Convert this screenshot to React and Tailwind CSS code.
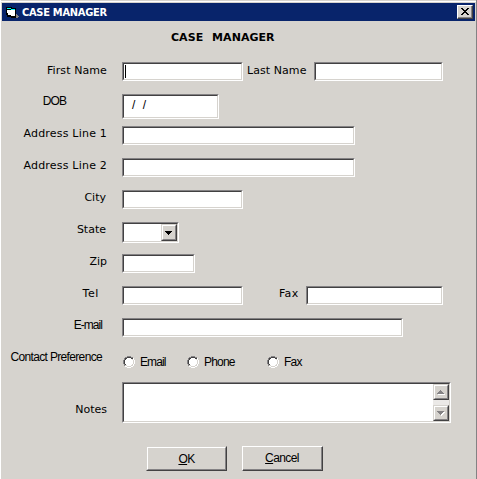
import React from 'react';

function Label({ className = '', children }) {
  return <span className={`block shrink-0 whitespace-pre leading-[13px] ${className}`}>{children}</span>;
}

function Field({ className = '', children }) {
  return (
    <div className={`shrink-0 border-t border-l border-b border-r border-t-[#848284] border-l-[#848284] border-b-white border-r-white ${className}`}>
      <div className="flex h-full w-full border border-t-[#424142] border-l-[#424142] border-b-[#d6d3ce] border-r-[#d6d3ce] bg-white">
        {children}
      </div>
    </div>
  );
}

function Row({ label, labelClass = '', className = 'h-8', children }) {
  return (
    <div className={`flex shrink-0 items-start ${className}`}>
      <div className="flex w-[121px] shrink-0 justify-end">
        <Label className={labelClass}>{label}</Label>
      </div>
      {children}
    </div>
  );
}

function Radio({ label, className = '', labelClass = '' }) {
  return (
    <div className={`flex shrink-0 items-start ${className}`}>
      <svg className="mt-[6px] shrink-0" width="12" height="12" viewBox="0 0 12 12" shapeRendering="crispEdges">
        <path fill="#fff" d="M4 1h4v1h2v2h1v4h-1v2h-2v1h-4v-1h-2v-2h-1v-4h1v-2h2z" />
        <path fill="#848284" d="M4 0h4v1h-4zM2 1h2v1h-2zM8 1h2v1h-2zM1 2h1v2h-1zM0 4h1v4h-1zM1 8h1v2h-1z" />
        <path fill="#424142" d="M4 1h4v1h-4zM2 2h2v1h-2zM8 2h2v1h-2zM2 3h1v1h-1zM1 4h1v4h-1zM2 8h1v1h-1z" />
        <path fill="#d6d3ce" d="M9 3h1v1h-1zM10 4h1v4h-1zM9 8h1v1h-1zM8 9h2v1h-2zM4 10h4v1h-4zM2 9h2v1h-2z" />
        <path fill="#fff" d="M10 2h1v2h-1zM11 4h1v4h-1zM10 8h1v2h-1zM8 10h2v1h-2zM4 11h4v1h-4zM2 10h2v1h-2z" />
      </svg>
      <Label className={`mt-[6px] ml-[5px] font-['Liberation_Sans',sans-serif] text-[12px] ${labelClass}`}>{label}</Label>
    </div>
  );
}

const raised = 'flex items-center justify-center border border-t-[#d6d3ce] border-l-[#d6d3ce] border-r-[#424142] border-b-[#424142] bg-[#d6d3ce]';
const raisedInner = 'h-full w-full border border-t-white border-l-white border-r-[#848284] border-b-[#848284]';

function ScrollButton({ down }) {
  return (
    <div className={`h-4 w-4 shrink-0 ${raised}`}>
      <div className={raisedInner}>
        <svg width="12" height="12" viewBox="0 0 12 12" shapeRendering="crispEdges">
          {down ? (
            <>
              <path fill="#fff" d="M3 5h7v1h-1v1h-1v1h-1v1h-1v-1h-1v-1h-1v-1h-1z" />
              <path fill="#848284" d="M2 4h7v1h-1v1h-1v1h-1v1h-1v-1h-1v-1h-1v-1h-1z" />
            </>
          ) : (
            <>
              <path fill="#fff" d="M3 8h7v1h-7z" />
              <path fill="#848284" d="M5 4h1v1h1v1h1v1h1v1h-7v-1h1v-1h1v-1h1z" />
            </>
          )}
        </svg>
      </div>
    </div>
  );
}

export default function App() {
  return (
    <div className="flex h-[479px] w-[477px] flex-col overflow-hidden border-l border-r border-l-white border-r-[#848284] bg-[#d6d3ce] font-['DejaVu_Sans',sans-serif] text-[11px] text-black">
      <div className="mt-px h-px shrink-0 bg-white" />
      <header className="mx-px mt-px flex h-[18px] shrink-0 items-center bg-[#08246b] pr-[2px] pl-1">
        <svg className="shrink-0" width="13" height="12" viewBox="0 0 13 12" shapeRendering="crispEdges">
          <path fill="#000" d="M0 1h6v1h4v10h-5v-1h-4v-2h-1z" />
          <path fill="#fff" d="M1 4h8v6h-4v-1h-3v-2h-1z" />
          <path fill="#00ffff" d="M1 2h4v1h-4zM5 3h4v1h-4z" />
          <path fill="#848284" d="M10 8h1v1h1v1h1v1h-1v1h-2z" />
        </svg>
        <h1 className="ml-[3px] w-max whitespace-nowrap font-['DejaVu_Sans_Condensed','DejaVu_Sans',sans-serif] text-[11px] leading-[13px] font-bold tracking-[-0.28px] text-white">
          CASE MANAGER
        </h1>
        <button className="ml-auto h-[14px] w-4 shrink-0 border border-t-white border-l-white border-r-[#424142] border-b-[#424142] bg-[#d6d3ce]">
          <span className="block h-full w-full border-r border-b border-[#848284]">
            <svg width="13" height="11" viewBox="0 0 13 11" shapeRendering="crispEdges">
              <path fill="#000" d="M3 2h2v1h1v1h2v-1h1v-1h2v1h-1v1h-1v1h-1v1h1v1h1v1h1v1h-2v-1h-1v-1h-2v1h-1v1h-2v-1h1v-1h1v-1h1v-1h-1v-1h-1v-1h-1z" />
            </svg>
          </span>
        </button>
      </header>

      <main className="flex flex-col">
        <h2 className="mt-[10px] ml-[170px] mb-[18px] h-[13px] w-max whitespace-nowrap text-[11px] leading-[13px] font-bold tracking-[0.05px] [word-spacing:5px]">
          CASE MANAGER
        </h2>

        <Row label="First Name" labelClass="mt-[2px] mr-[15px] tracking-[0.1px]">
          <Field className="h-[19px] w-[121px]">
            <span className="mt-px ml-px h-[13px] w-px bg-black" />
          </Field>
          <Label className="mt-[2px] ml-[4px] w-[67px] tracking-[0.07px]">Last Name</Label>
          <Field className="h-[19px] w-[129px]" />
        </Row>

        <Row label="DOB" labelClass="mt-[1px] mr-[56px] font-['Liberation_Sans',sans-serif] text-[12px] tracking-[-0.9px]">
          <Field className="h-[25px] w-[97px]">
            <Label className="mt-[3px] ml-[8px] font-['Liberation_Sans',sans-serif] text-[12px] tracking-[2px]">/ /</Label>
          </Field>
        </Row>

        <Row label="Address Line 1" labelClass="mt-[1px] mr-[15px] tracking-[0.2px]">
          <Field className="h-[19px] w-[233px]" />
        </Row>
        <Row label="Address Line 2" labelClass="mt-[1px] mr-[15px] tracking-[0.2px]">
          <Field className="h-[19px] w-[233px]" />
        </Row>
        <Row label="City" labelClass="mt-[1px] mr-[16px]">
          <Field className="h-[19px] w-[121px]" />
        </Row>
        <Row label="State" labelClass="mt-[1px] mr-[16px]">
          <Field className="h-[21px] w-[57px]">
            <div className={`ml-auto h-[17px] w-4 ${raised}`}>
              <div className={raisedInner}>
                <svg width="12" height="13" viewBox="0 0 12 13" shapeRendering="crispEdges">
                  <path fill="#000" d="M2 5h7v1h-1v1h-1v1h-1v1h-1v-1h-1v-1h-1v-1h-1z" />
                </svg>
              </div>
            </div>
          </Field>
        </Row>
        <Row label="Zip" labelClass="mt-[1px] mr-[15px]">
          <Field className="h-[19px] w-[73px]" />
        </Row>
        <Row label="Tel" labelClass="mt-[1px] mr-[23px] tracking-[0.6px]">
          <Field className="h-[19px] w-[121px]" />
          <Label className="mt-[1px] ml-[36px] w-[27px] tracking-[0.3px]">Fax</Label>
          <Field className="h-[19px] w-[137px]" />
        </Row>
        <Row label="E-mail" labelClass="mt-[1px] mr-[20px] font-['Liberation_Sans',sans-serif] text-[12px] tracking-[-0.95px]">
          <Field className="h-[19px] w-[281px]" />
        </Row>
        <Row label="Contact Preference" labelClass="mt-[1px] mr-[20px] font-['Liberation_Sans',sans-serif] text-[12px] tracking-[-0.66px]">
          <Radio label="Email" className="ml-px w-[64px]" labelClass="tracking-[-0.9px]" />
          <Radio label="Phone" className="w-[80px]" labelClass="tracking-[-0.8px]" />
          <Radio label="Fax" labelClass="tracking-[-0.8px]" />
        </Row>
        <Row label="Notes" labelClass="mt-[21px] mr-[15px]" className="h-[64px]">
          <Field className="h-[41px] w-[329px]">
            <div className="ml-auto flex w-4 flex-col">
              <ScrollButton />
              <div className="h-[5px] bg-[#ebe9e7]" />
              <ScrollButton down />
            </div>
          </Field>
        </Row>

        <div className="ml-[145px] flex gap-[15px] font-['Liberation_Sans',sans-serif] text-[12px] leading-[13px] tracking-[-0.6px]">
          <button className={`h-[25px] w-[81px] ${raised}`}>
            <span className={`${raisedInner} pt-[5px]`}><u>O</u>K</span>
          </button>
          <button className="h-[25px] w-[81px] border border-t-white border-l-white border-r-[#424142] border-b-[#424142]">
            <span className="block h-full w-full border-r border-b border-[#848284] pt-[5px]"><u>C</u>ancel</span>
          </button>
        </div>
      </main>
    </div>
  );
}
